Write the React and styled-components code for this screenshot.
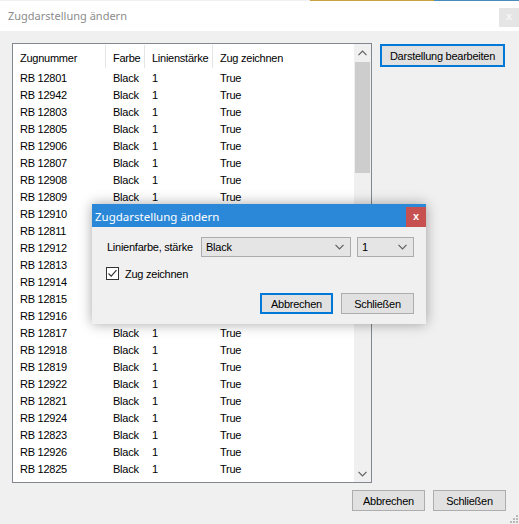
import React from "react";
import styled, { createGlobalStyle } from "styled-components";

const GlobalStyle = createGlobalStyle`
  html, body {
    margin: 0;
    padding: 0;
    background: #f0f0f0;
  }
  body {
    font-family: "Liberation Sans", Arial, sans-serif;
    font-size: 11px;
    letter-spacing: -0.25px;
    color: #000;
  }
`;

const trains = [
  "12801", "12942", "12803", "12805", "12906", "12807", "12908", "12809",
  "12910", "12811", "12912", "12813", "12914", "12815", "12916", "12817",
  "12918", "12819", "12922", "12821", "12924", "12823", "12926", "12825",
];

const Chevron = ({ dir = "down", color = "#606060" }) => (
  <svg width="9" height="6" viewBox="0 0 9 6">
    <polyline
      points={dir === "down" ? "0.5,0.8 4.5,4.8 8.5,0.8" : "0.5,5.2 4.5,1.2 8.5,5.2"}
      fill="none"
      stroke={color}
      strokeWidth="1.2"
    />
  </svg>
);

const App = () => {
  return (
    <Window>
      <GlobalStyle />
      <AccentStripe>
        <span className="plain" />
        <span className="gold" />
        <span className="blue" />
      </AccentStripe>
      <TitleBar>
        <span>Zugdarstellung ändern</span>
        <CloseBox $inactive>x</CloseBox>
      </TitleBar>

      <Body>
        <MainRow>
          <ListBox>
            <ListContent>
              <HeaderRow>
                <HeaderCell>Zugnummer</HeaderCell>
                <HeaderCell>Farbe</HeaderCell>
                <HeaderCell>Linienstärke</HeaderCell>
                <HeaderCell $last>Zug zeichnen</HeaderCell>
              </HeaderRow>
              {trains.map((t) => (
                <Row key={t}>
                  <Cell>RB {t}</Cell>
                  <Cell>Black</Cell>
                  <Cell>1</Cell>
                  <Cell>True</Cell>
                </Row>
              ))}
            </ListContent>
            <ScrollBar>
              <ScrollArrow>
                <Chevron dir="up" color="#606060" />
              </ScrollArrow>
              <ScrollTrack>
                <Thumb />
              </ScrollTrack>
              <ScrollArrow>
                <Chevron dir="down" color="#606060" />
              </ScrollArrow>
            </ScrollBar>
          </ListBox>
          <SideColumn>
            <Button $primary $w={125} $h={23}>
              Darstellung bearbeiten
            </Button>
          </SideColumn>
        </MainRow>

        <Footer>
          <Button $w={73} $h={21}>Abbrechen</Button>
          <Button $w={73} $h={21}>Schließen</Button>
        </Footer>
      </Body>

      <Grip width="9" height="9" viewBox="0 0 9 9">
        {[
          [6, 0], [3, 3], [6, 3], [0, 6], [3, 6], [6, 6],
        ].map(([x, y]) => (
          <rect key={`${x}-${y}`} x={x + 1} y={y + 1} width="2" height="2" fill="#b8b8b8" />
        ))}
      </Grip>

      <Dialog>
        <DialogTitle>
          <span>Zugdarstellung ändern</span>
          <CloseBox>x</CloseBox>
        </DialogTitle>
        <DialogBody>
          <FieldRow>
            <FieldLabel>Linienfarbe, stärke</FieldLabel>
            <Combo $w={150}>
              <span>Black</span>
              <Chevron />
            </Combo>
            <Combo $w={57}>
              <span>1</span>
              <Chevron />
            </Combo>
          </FieldRow>
          <CheckRow>
            <CheckBox>
              <svg width="11" height="11" viewBox="0 0 11 11">
                <polyline points="1.5,5.5 4.2,8.2 9.5,2.2" fill="none" stroke="#333" strokeWidth="1.2" />
              </svg>
            </CheckBox>
            <span>Zug zeichnen</span>
          </CheckRow>
          <DialogButtons>
            <Button $primary $w={73} $h={21}>Abbrechen</Button>
            <Button $w={73} $h={21}>Schließen</Button>
          </DialogButtons>
        </DialogBody>
      </Dialog>
    </Window>
  );
};

const Window = styled.div`
  position: relative;
  width: 519px;
  height: 524px;
  background: #f0f0f0;
  overflow: hidden;
  display: flex;
  flex-direction: column;
`;

const AccentStripe = styled.div`
  display: flex;
  height: 1px;
  span.plain {
    width: 310px;
    background: #f0f0f0;
  }
  span.gold {
    width: 124px;
    background: #c9a13f;
  }
  span.blue {
    flex: 1;
    background: #4a8bbd;
  }
`;

const TitleBar = styled.div`
  height: 30px;
  background: #fff;
  display: flex;
  align-items: center;
  justify-content: space-between;
  padding-left: 8px;
  color: #8c8c8c;
  font-family: "Noto Sans", sans-serif;
  font-size: 11px;
  letter-spacing: 0;
  span {
    margin-top: -1px;
  }
`;

const CloseBox = styled.div`
  width: 20px;
  height: ${(p) => (p.$inactive ? "19px" : "20px")};
  align-self: ${(p) => (p.$inactive ? "flex-start" : "flex-end")};
  margin-top: ${(p) => (p.$inactive ? "7px" : "0")};
  background: ${(p) => (p.$inactive ? "#e5e5e5" : "#c75050")};
  color: ${(p) => (p.$inactive ? "#f6f6f6" : "#fff")};
  font-family: "Liberation Sans", sans-serif;
  font-weight: bold;
  font-size: 11px;
  display: flex;
  align-items: center;
  justify-content: center;
  line-height: 1;
  padding-bottom: 2px;
  box-sizing: border-box;
`;

const Body = styled.div`
  flex: 1;
  display: flex;
  flex-direction: column;
  padding: 12px 13px 0 12px;
`;

const MainRow = styled.div`
  display: flex;
  gap: 8px;
`;

const ListBox = styled.div`
  width: 360px;
  height: 440px;
  box-sizing: border-box;
  border: 1px solid #828790;
  background: #fff;
  display: flex;
  overflow: hidden;
`;

const ListContent = styled.div`
  flex: 1;
  display: flex;
  flex-direction: column;
`;

const columns = "93px 39px 68px 1fr";

const HeaderRow = styled.div`
  display: grid;
  grid-template-columns: ${columns};
  height: 25px;
  align-items: stretch;
  margin-top: 1px;
`;

const HeaderCell = styled.div`
  display: flex;
  align-items: center;
  padding-left: 7px;
  border-right: ${(p) => (p.$last ? "none" : "1px solid #e5e5e5")};
  margin-bottom: 2px;
  padding-top: 2px;
  white-space: nowrap;
`;

const Row = styled.div`
  display: grid;
  grid-template-columns: ${columns};
  height: 17px;
  align-items: center;
`;

const Cell = styled.div`
  padding-left: 7px;
  white-space: nowrap;
  line-height: 17px;
`;

const ScrollBar = styled.div`
  width: 17px;
  background: #f0f0f0;
  display: flex;
  flex-direction: column;
`;

const ScrollArrow = styled.div`
  height: 17px;
  display: flex;
  align-items: center;
  justify-content: center;
`;

const ScrollTrack = styled.div`
  flex: 1;
  padding: 1px 1px;
`;

const Thumb = styled.div`
  height: 111px;
  background: #cdcdcd;
`;

const SideColumn = styled.div`
  display: flex;
  flex-direction: column;
  padding-top: 1px;
`;

const Button = styled.button`
  width: ${(p) => p.$w}px;
  height: ${(p) => p.$h}px;
  box-sizing: border-box;
  background: #e1e1e1;
  border: ${(p) => (p.$primary ? "2px solid #0078d7" : "1px solid #adadad")};
  font-family: "Liberation Sans", Arial, sans-serif;
  font-size: 11px;
  letter-spacing: -0.25px;
  color: #000;
  padding: 0;
  display: flex;
  align-items: center;
  justify-content: center;
  white-space: nowrap;
`;

const Footer = styled.div`
  display: flex;
  justify-content: flex-end;
  gap: 8px;
  margin-top: 7px;
`;

const Grip = styled.svg`
  position: absolute;
  right: 1px;
  bottom: 1px;
`;

const Dialog = styled.div`
  position: absolute;
  left: 92px;
  top: 204px;
  width: 334px;
  height: 120px;
  background: #f0f0f0;
  box-shadow: 0 0 12px rgba(0, 0, 0, 0.35);
  display: flex;
  flex-direction: column;
`;

const DialogTitle = styled.div`
  height: 23px;
  background: #2b88d8;
  color: #fff;
  font-family: "Noto Sans", sans-serif;
  font-size: 11.5px;
  letter-spacing: 0;
  display: flex;
  align-items: center;
  justify-content: space-between;
  padding-left: 3px;
  padding-right: 0;
  span {
    margin-top: 1px;
  }
`;

const DialogBody = styled.div`
  flex: 1;
  display: flex;
  flex-direction: column;
  padding: 10px 12px 0 15px;
`;

const FieldRow = styled.div`
  display: flex;
  align-items: center;
  gap: 6px;
`;

const FieldLabel = styled.div`
  width: 88px;
  white-space: nowrap;
`;

const Combo = styled.div`
  width: ${(p) => p.$w}px;
  height: 20px;
  box-sizing: border-box;
  border: 1px solid #acacac;
  background: #e5e5e5;
  display: flex;
  align-items: center;
  justify-content: space-between;
  padding: 0 6px 0 4px;
`;

const CheckRow = styled.div`
  display: flex;
  align-items: center;
  gap: 6px;
  margin-top: 10px;
  margin-left: -1px;
`;

const CheckBox = styled.div`
  width: 13px;
  height: 13px;
  box-sizing: border-box;
  border: 1px solid #333;
  background: #fff;
  display: flex;
  align-items: center;
  justify-content: center;
`;

const DialogButtons = styled.div`
  display: flex;
  justify-content: flex-end;
  gap: 8px;
  margin-top: 13px;
`;

export default App;
